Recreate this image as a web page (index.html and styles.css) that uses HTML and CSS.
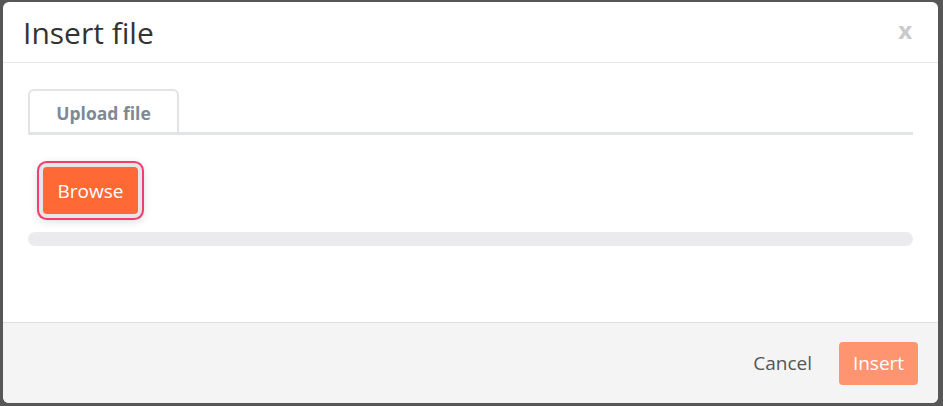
FILE: index.html
```html
<!DOCTYPE html>
<html lang="en">
<head>
    <meta charset="UTF-8">
    <meta name="viewport" content="width=device-width, initial-scale=1.0">
    <title>Insert file</title>
    <link rel="stylesheet" href="styles.css">
</head>
<body>
    <div class="modal">
        <div class="modal-header">
            <h1>Insert file</h1>
            <button type="button" class="close">x</button>
        </div>
        <div class="modal-body">
            <div class="tabs">
                <div class="tab active">Upload file</div>
            </div>
            <div class="browse-row">
                <button type="button" class="browse">Browse</button>
            </div>
            <div class="progress"></div>
        </div>
        <div class="modal-footer">
            <button type="button" class="cancel">Cancel</button>
            <button type="button" class="insert">Insert</button>
        </div>
    </div>
</body>
</html>
```

FILE: styles.css
```css
html, body {
    height: 100%;
}
body {
    font-family: "Open Sans", Arial, sans-serif;
    background-color: #575757;
    margin: 0;
    padding: 2px 5px 3px 3px;
    box-sizing: border-box;
}
.modal {
    height: 100%;
    background-color: #fff;
    border-radius: 6px;
    display: flex;
    flex-direction: column;
    overflow: hidden;
}
.modal-header {
    height: 60px;
    display: flex;
    align-items: center;
    justify-content: space-between;
    padding: 0 26px 0 20px;
    border-bottom: 1px solid #e8e8e8;
}
h1 {
    font-size: 30px;
    font-weight: normal;
    color: #333;
    margin: 0;
}
.close {
    background: none;
    border: none;
    padding: 0;
    font-family: "Open Sans", Arial, sans-serif;
    font-size: 24px;
    font-weight: bold;
    color: #cacaca;
    line-height: 1;
    margin-top: -4px;
}
.modal-body {
    flex: 1;
    padding: 26px 25px 0 25px;
}
.tabs {
    display: flex;
    border-bottom: 3px solid #e2e4e7;
}
.tab {
    width: 147px;
    height: 41px;
    border: 2px solid #e2e4e7;
    border-bottom: none;
    border-radius: 6px 6px 0 0;
    text-align: center;
    line-height: 44px;
    font-size: 17.5px;
    font-weight: bold;
    color: #7e8996;
}
.browse-row {
    padding: 32px 0 0 15px;
}
.browse {
    width: 95px;
    height: 47px;
    background-color: #fe6935;
    border: none;
    border-radius: 4px;
    color: #fff;
    font-family: "Open Sans", Arial, sans-serif;
    font-size: 19px;
    box-shadow: 0 0 0 4px #e6e6e6, 0 0 0 6px #f23c72, 0 2px 8px 6px rgba(0, 0, 0, 0.12);
    display: block;
}
.progress {
    height: 14px;
    margin-top: 18px;
    background-color: #ebebed;
    border-radius: 7px;
}
.modal-footer {
    height: 80px;
    background-color: #f4f4f4;
    border-top: 1px solid #dedede;
    display: flex;
    align-items: center;
    justify-content: flex-end;
    padding: 0 20px;
    gap: 27px;
}
.cancel {
    background: none;
    border: none;
    padding: 0;
    font-family: "Open Sans", Arial, sans-serif;
    font-size: 19px;
    color: #555;
}
.insert {
    width: 79px;
    height: 43px;
    background-color: #ff9470;
    border: none;
    border-radius: 4px;
    color: #fff;
    font-family: "Open Sans", Arial, sans-serif;
    font-size: 19px;
}
```
